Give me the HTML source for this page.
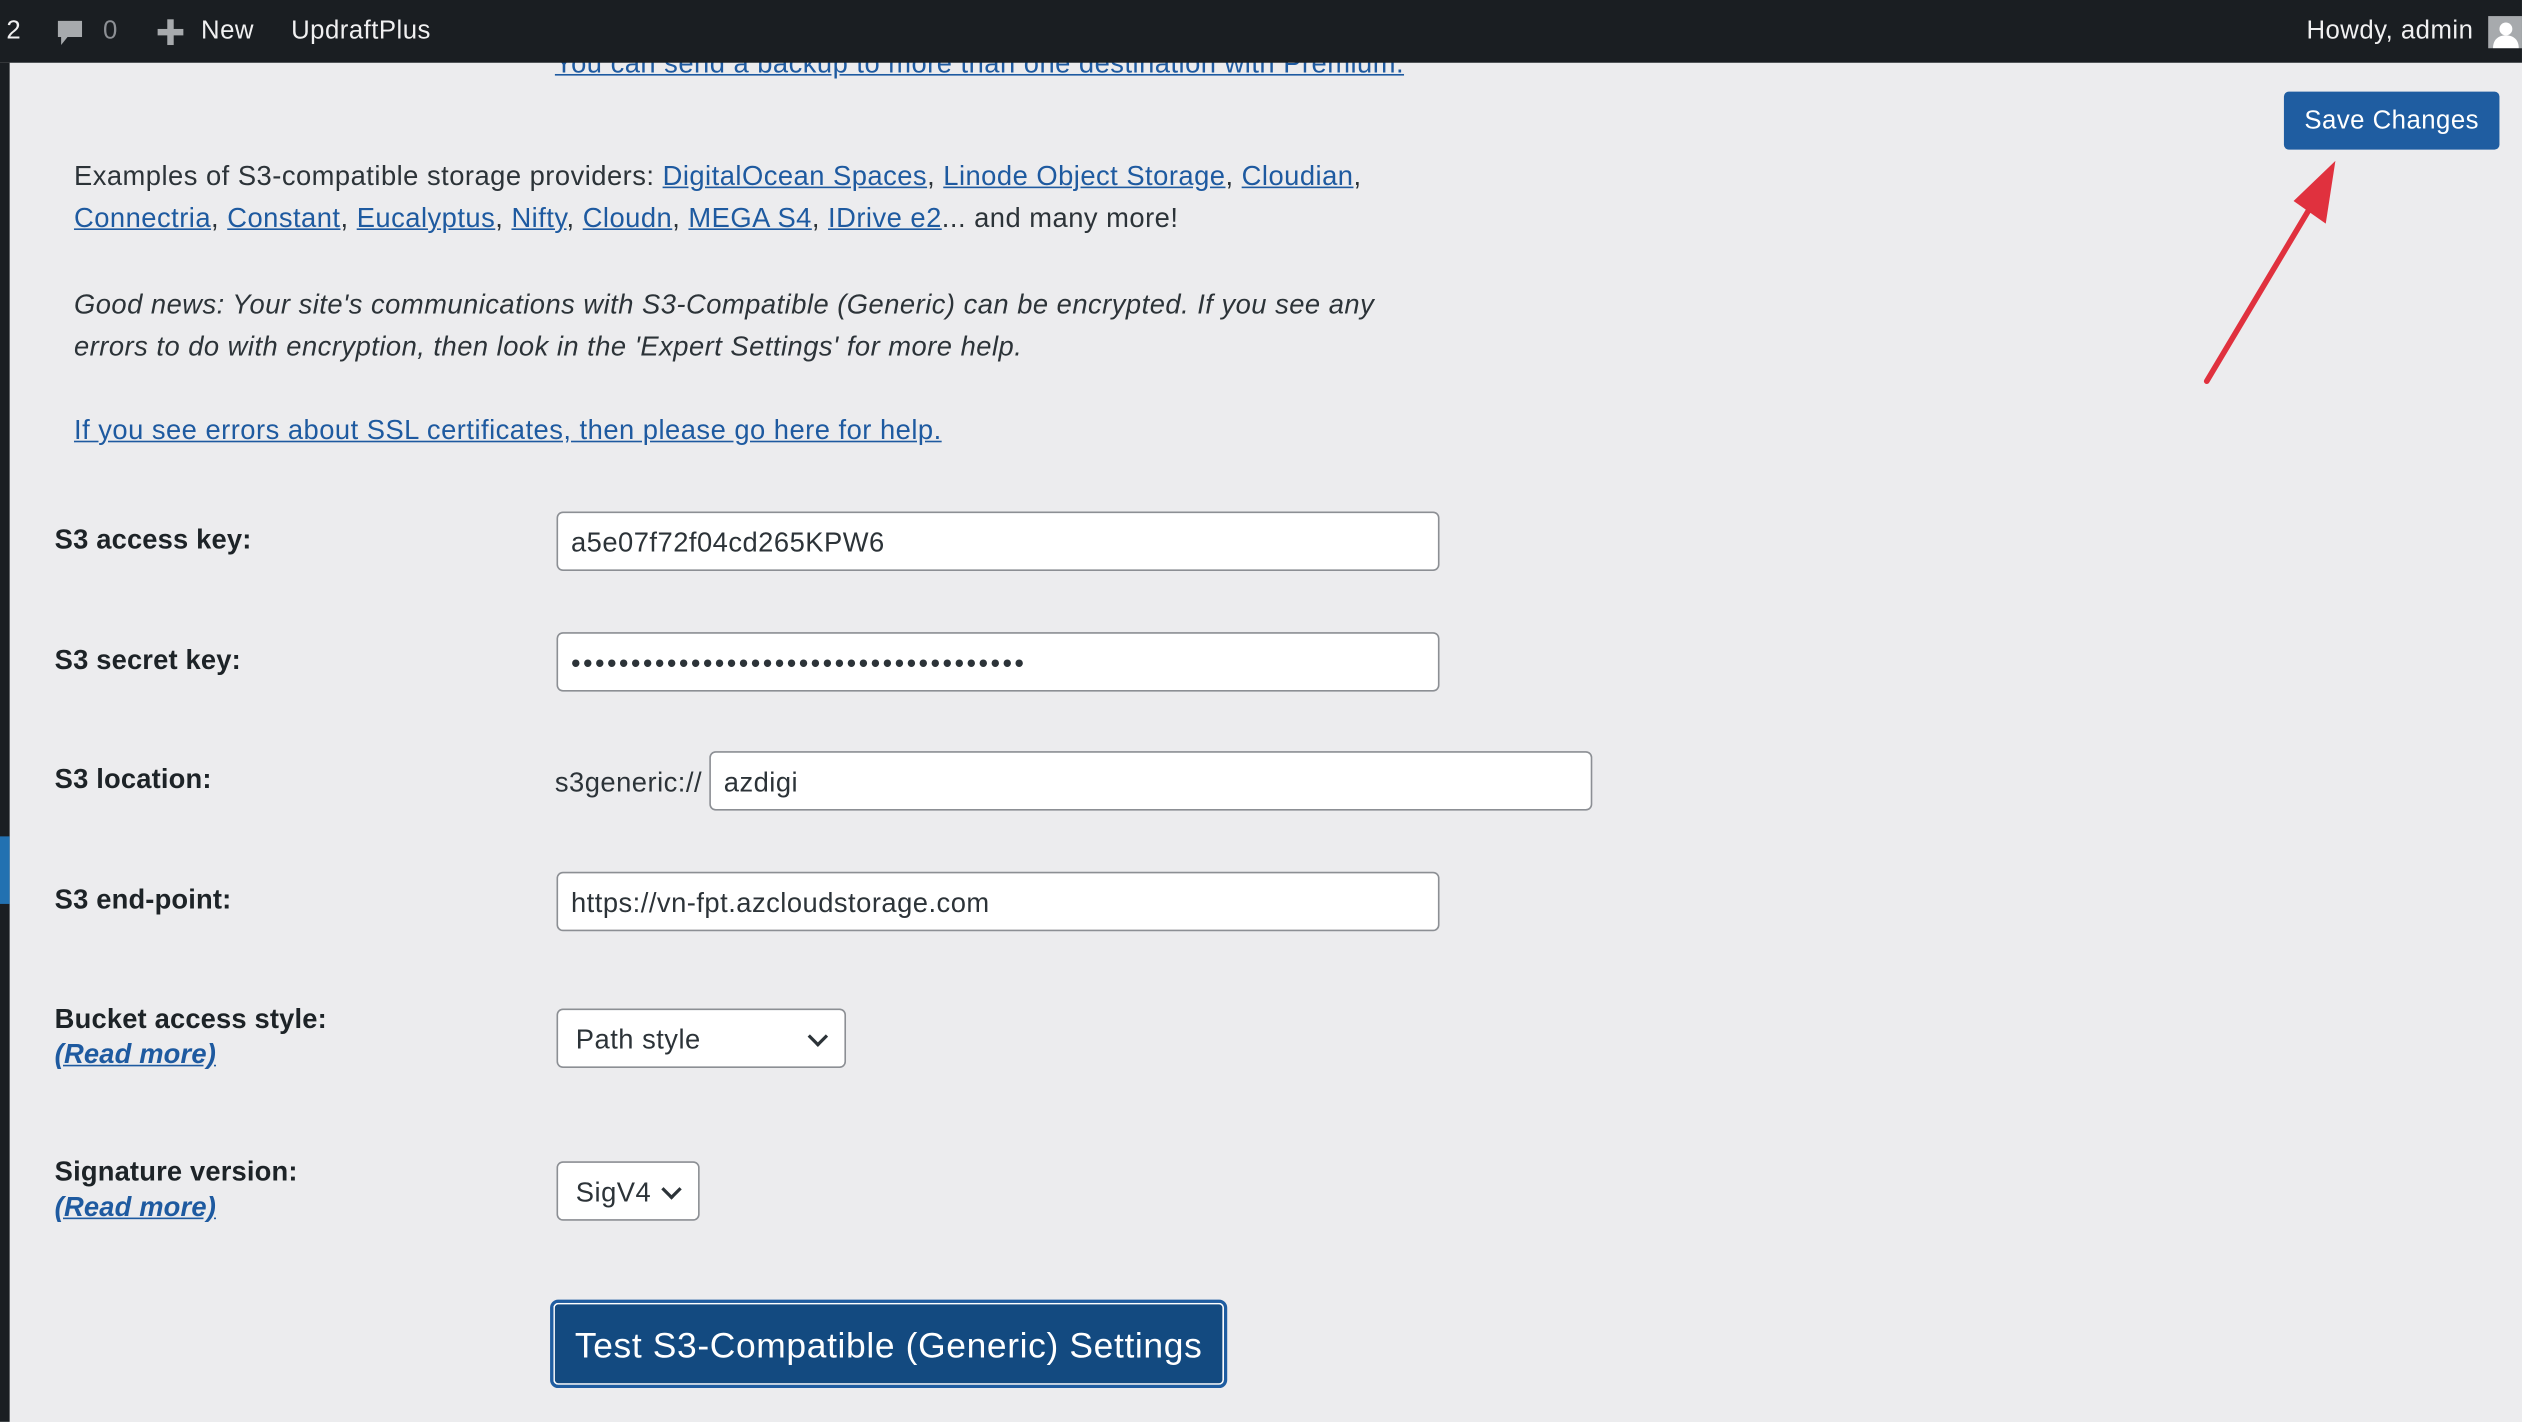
<!DOCTYPE html>
<html><head><meta charset="utf-8"><style>
html,body{margin:0;padding:0;width:2522px;height:1422px;overflow:hidden;background:#ececee}
#w{position:absolute;left:0;top:0;width:1568px;height:884px;transform:scale(1.6084);transform-origin:0 0;font-family:"Liberation Sans",sans-serif;color:#2c3338;font-size:17px;letter-spacing:0.3px}
.a{position:absolute;white-space:nowrap}
a{color:#1e5aa0;text-decoration:underline}
.lbl{position:absolute;left:34px;font-weight:bold;font-size:17px;color:#1d2327;letter-spacing:0.1px}
.inp{position:absolute;background:#fff;border:1px solid #8c8f94;border-radius:4px;box-sizing:border-box;height:37px;padding-left:8px;line-height:37px;font-size:17px;color:#2c3338}
.sel:after{content:"";position:absolute;right:12px;top:12px;width:7px;height:7px;border-right:2px solid #2c3338;border-bottom:2px solid #2c3338;transform:rotate(45deg)}
</style></head><body><div id="w">
<div class="a" style="left:345px;top:30px;font-size:17px"><a href="#">You can send a backup to more than one destination with Premium.</a></div>
<div class="a" style="left:0;top:0;width:1568px;height:39px;background:#1a1e22"></div>
<div class="a" style="left:0;top:39px;width:6px;height:845px;background:#1a1e22"></div>
<div class="a" style="left:0;top:520px;width:6px;height:42px;background:#2271b1"></div>
<div class="a" style="left:4px;top:11px;color:#f0f0f1;font-size:16px">2</div>
<svg class="a" style="left:34px;top:11px" width="20" height="20" viewBox="0 0 20 20"><path d="M2 2h15v10H8l-4 5v-5H2z" fill="#a7aaad"/></svg>
<div class="a" style="left:64px;top:11px;color:#8c8f94;font-size:16px">0</div>
<svg class="a" style="left:97px;top:11px" width="18" height="18"><rect x="7" y="1" width="4" height="16" fill="#a7aaad"/><rect x="1" y="7" width="16" height="4" fill="#a7aaad"/></svg>
<div class="a" style="left:125px;top:11px;color:#f0f0f1;font-size:16px">New</div>
<div class="a" style="left:181px;top:11px;color:#f0f0f1;font-size:16px">UpdraftPlus</div>
<div class="a" style="left:1434px;top:11px;color:#f0f0f1;font-size:16px">Howdy, admin</div>
<div class="a" style="left:1547px;top:10px;width:21px;height:20px;background:#a7aaad"><svg width="21" height="20"><circle cx="11" cy="8" r="4" fill="#fff"/><path d="M3 20c0-6 4-8 8-8s8 2 8 8z" fill="#fff"/></svg></div>
<div class="a" style="left:1420px;top:57px;width:134px;height:36px;background:#1f5da1;border-radius:3px;color:#fff;font-size:16px;line-height:38px;text-align:center">Save Changes</div>
<svg class="a" style="left:1360px;top:95px" width="100" height="150"><line x1="12" y1="142" x2="80" y2="28" stroke="#e0313e" stroke-width="3.5" stroke-linecap="round"/><path d="M92 5 L66 30 L86 44 Z" fill="#e0313e"/></svg>
<div class="a" style="left:46px;top:97px;line-height:26px">Examples of S3-compatible storage providers: <a href="#">DigitalOcean Spaces</a>, <a href="#">Linode Object Storage</a>, <a href="#">Cloudian</a>,<br><a href="#">Connectria</a>, <a href="#">Constant</a>, <a href="#">Eucalyptus</a>, <a href="#">Nifty</a>, <a href="#">Cloudn</a>, <a href="#">MEGA S4</a>, <a href="#">IDrive e2</a>... and many more!</div>
<div class="a" style="left:46px;top:177px;line-height:26px;font-style:italic">Good news: Your site's communications with S3-Compatible (Generic) can be encrypted. If you see any<br>errors to do with encryption, then look in the 'Expert Settings' for more help.</div>
<div class="a" style="left:46px;top:258px"><a href="#">If you see errors about SSL certificates, then please go here for help.</a></div>
<div class="lbl" style="top:326px">S3 access key:</div>
<div class="inp" style="left:346px;top:318px;width:549px">a5e07f72f04cd265KPW6</div>
<div class="lbl" style="top:401px">S3 secret key:</div>
<div class="inp" style="left:346px;top:393px;width:549px;letter-spacing:1.5px">••••••••••••••••••••••••••••••••••••••</div>
<div class="lbl" style="top:475px">S3 location:</div>
<div class="a" style="left:345px;top:477px">s3generic://</div>
<div class="inp" style="left:441px;top:467px;width:549px">azdigi</div>
<div class="lbl" style="top:550px">S3 end-point:</div>
<div class="inp" style="left:346px;top:542px;width:549px">https://vn-fpt.azcloudstorage.com</div>
<div class="lbl" style="top:624px">Bucket access style:<br><a href="#" style="font-style:italic;line-height:23px">(Read more)</a></div>
<div class="inp sel" style="left:346px;top:627px;width:180px;padding-left:11px">Path style</div>
<div class="lbl" style="top:719px">Signature version:<br><a href="#" style="font-style:italic;line-height:23px">(Read more)</a></div>
<div class="inp sel" style="left:346px;top:722px;width:89px;padding-left:11px">SigV4</div>
<div class="a" style="left:342px;top:808px;width:421px;height:55px;box-sizing:border-box;border:2px solid #1f5da1;border-radius:5px;background:#134a80;box-shadow:inset 0 0 0 1px #fff"><div style="color:#fff;font-size:22px;line-height:53px;text-align:center;letter-spacing:0.4px">Test S3-Compatible (Generic) Settings</div></div>
</div></body></html>
